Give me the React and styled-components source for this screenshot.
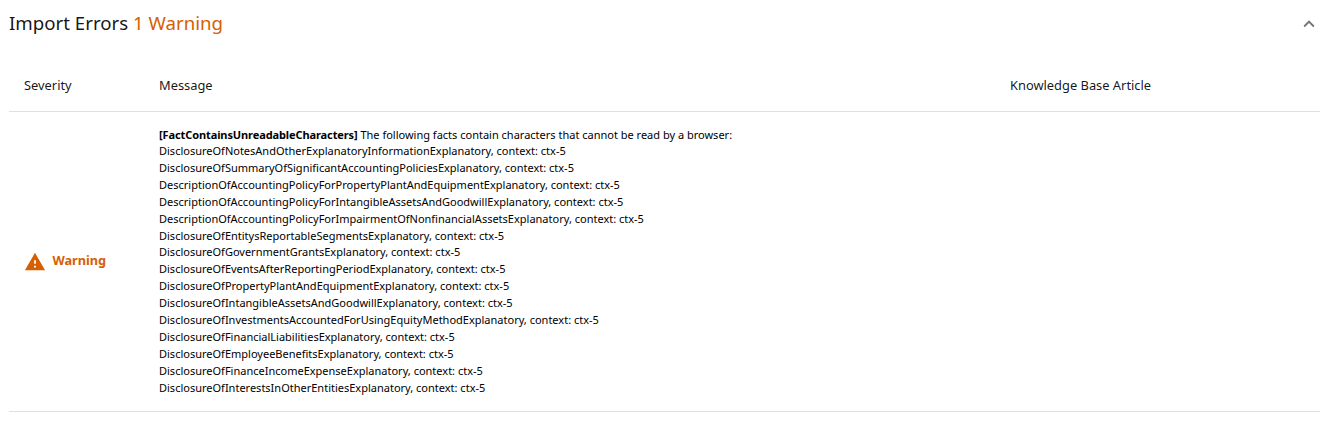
import React, { useState } from "react";
import styled, { createGlobalStyle } from "styled-components";

const GlobalStyle = createGlobalStyle`
  body {
    margin: 0;
    background: #fff;
    color: rgba(0, 0, 0, 0.92);
    font-family: "Noto Sans", sans-serif;
  }
`;

const Panel = styled.section`
  padding: 0 10px 0 9px;
`;

const PanelHeader = styled.header`
  display: flex;
  align-items: center;
  justify-content: space-between;
  height: 48px;
`;

const Title = styled.h2`
  margin: 0;
  padding-bottom: 2px;
  font-size: 18.66px;
  font-weight: 400;
  line-height: 24px;
`;

const WarningCount = styled.span`
  color: #d66000;
`;

const ToggleButton = styled.button`
  display: flex;
  padding: 0;
  border: 0;
  background: none;
  color: rgba(0, 0, 0, 0.54);
  cursor: pointer;
`;

const Row = styled.div`
  display: grid;
  grid-template-columns: 135px 851px 1fr;
  align-items: center;
  border-bottom: 1px solid #e0e0e0;
`;

const HeadRow = styled(Row)`
  height: 51px;
  margin-top: 12px;
  font-size: 12.86px;
  line-height: 18px;
`;

const Cell = styled.div`
  padding-left: 15px;
`;

const HeadCell = styled(Cell)`
  padding-bottom: 2px;
`;

const Severity = styled(Cell)`
  display: flex;
  align-items: center;
  gap: 6.5px;
  color: #d66000;
`;

const SeverityLabel = styled.span`
  padding-bottom: 3px;
  font-size: 12.7px;
  font-weight: 700;
  line-height: 18px;
`;

const Message = styled(Cell)`
  padding-top: 15px;
  padding-bottom: 14.3px;
  color: #000;
  font-size: 11.01px;
  line-height: 16.92px;
`;

const Summary = styled.div`
  line-height: 15.93px;
`;

const Code = styled.b`
  letter-spacing: -0.1px;
`;

const facts = [
  "DisclosureOfNotesAndOtherExplanatoryInformationExplanatory",
  "DisclosureOfSummaryOfSignificantAccountingPoliciesExplanatory",
  "DescriptionOfAccountingPolicyForPropertyPlantAndEquipmentExplanatory",
  "DescriptionOfAccountingPolicyForIntangibleAssetsAndGoodwillExplanatory",
  "DescriptionOfAccountingPolicyForImpairmentOfNonfinancialAssetsExplanatory",
  "DisclosureOfEntitysReportableSegmentsExplanatory",
  "DisclosureOfGovernmentGrantsExplanatory",
  "DisclosureOfEventsAfterReportingPeriodExplanatory",
  "DisclosureOfPropertyPlantAndEquipmentExplanatory",
  "DisclosureOfIntangibleAssetsAndGoodwillExplanatory",
  "DisclosureOfInvestmentsAccountedForUsingEquityMethodExplanatory",
  "DisclosureOfFinancialLiabilitiesExplanatory",
  "DisclosureOfEmployeeBenefitsExplanatory",
  "DisclosureOfFinanceIncomeExpenseExplanatory",
  "DisclosureOfInterestsInOtherEntitiesExplanatory"
];

function WarningIcon() {
  return (
    <svg width="22" height="22" viewBox="0 0 24 24" fill="currentColor">
      <path d="M1 21h22L12 2 1 21zm12-3h-2v-2h2v2zm0-4h-2v-4h2v4z" />
    </svg>
  );
}

function CollapseIcon() {
  return (
    <svg width="22" height="22" viewBox="0 0 24 24" fill="currentColor">
      <path d="M12 8l-6 6 1.41 1.41L12 10.83l4.59 4.58L18 14z" />
    </svg>
  );
}

export default function App() {
  const [open, setOpen] = useState(true);

  return (
    <Panel>
      <GlobalStyle />
      <PanelHeader>
        <Title>
          Import Errors <WarningCount>1 Warning</WarningCount>
        </Title>
        <ToggleButton aria-expanded={open} onClick={() => setOpen(!open)}>
          <CollapseIcon />
        </ToggleButton>
      </PanelHeader>
      {open && (
        <>
          <HeadRow>
            <HeadCell>Severity</HeadCell>
            <HeadCell>Message</HeadCell>
            <HeadCell>Knowledge Base Article</HeadCell>
          </HeadRow>
          <Row>
            <Severity>
              <WarningIcon />
              <SeverityLabel>Warning</SeverityLabel>
            </Severity>
            <Message>
              <Summary>
                <Code>[FactContainsUnreadableCharacters]</Code> The following
                facts contain characters that cannot be read by a browser:
              </Summary>
              {facts.map(fact => (
                <div key={fact}>{fact}, context: ctx-5</div>
              ))}
            </Message>
          </Row>
        </>
      )}
    </Panel>
  );
}
